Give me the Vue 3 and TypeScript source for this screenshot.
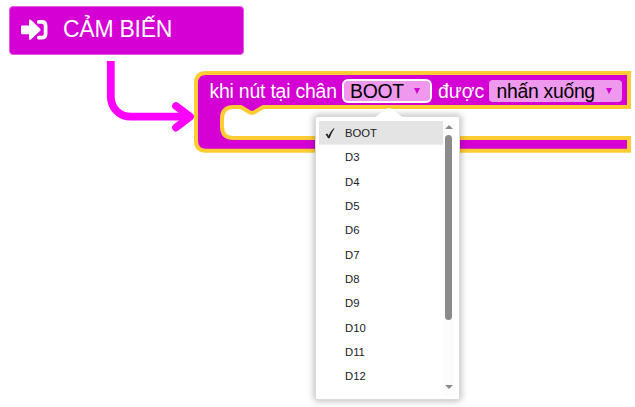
<script setup lang="ts">
import { ref } from 'vue'

const pins: string[] = ['BOOT', 'D3', 'D4', 'D5', 'D6', 'D7', 'D8', 'D9', 'D10', 'D11', 'D12']
const selected = ref('BOOT')
</script>

<template>
  <main class="workspace">
    <header class="category">
      <svg class="category-icon" viewBox="0 0 28 22" aria-hidden="true">
        <path d="M1.2 6.4H8V1.8Q8.2 -.2 10 1L19.2 9.8Q20 10.8 19.2 11.8L10 20.6Q8.2 21.6 8 19.8V15.2H1.2Q0 15.2 0 14V7.6Q0 6.4 1.2 6.4Z" />
        <path class="bracket" d="M17.8 2.9H20.8Q24.6 2.9 24.6 6.7V14.9Q24.6 18.7 20.8 18.7H17.8" />
      </svg>
      <span class="category-name">CẢM BIẾN</span>
    </header>

    <svg class="connector" viewBox="0 0 90 75" aria-hidden="true">
      <path class="line" d="M5.8 1V36.5C5.8 48 14.5 56.7 26 56.7H84" />
      <path class="head" d="M71 46L85 56.7L71 67.5" />
    </svg>

    <section class="block">
      <svg class="block-shape" viewBox="0 0 441 86" aria-hidden="true">
        <path d="M14 4H437V38H71L62.5 43.2Q60 44.5 57.5 43.2L49 38H41.5Q30 38 30 49.5V57.5Q30 69 41.5 69H437V81.8H14Q4 81.8 4 71.8V14Q4 4 14 4Z" />
      </svg>
      <div class="block-row">
        <span class="label first">khi nút tại chân</span>
        <button class="field active"><span>{{ selected }}</span><i class="caret"></i></button>
        <span class="label second">được</span>
        <button class="field state"><span>nhấn xuống</span><i class="caret"></i></button>
      </div>
    </section>

    <div class="menu">
      <svg class="pointer" viewBox="0 0 32 12" aria-hidden="true">
        <path d="M1 11L14 1.5Q16 .3 18 1.5L31 11V12H1Z" />
      </svg>
      <ul class="options">
        <li v-for="pin in pins" :key="pin" class="option" :class="{ chosen: pin === selected }" @click="selected = pin">
          <span class="mark"><svg v-if="pin === selected" viewBox="0 0 10 11"><path d="M.4 6.6L2.2 5.4L3.6 7.7Q5.8 3.2 8.4 .6L9.6 .3Q6.6 4.6 4.6 10.2H3Q2 7.8 .4 6.6Z" /></svg></span>
          <span>{{ pin }}</span>
        </li>
      </ul>
      <div class="scrollbar">
        <i class="up"></i>
        <i class="thumb"></i>
        <i class="down"></i>
      </div>
    </div>
  </main>
</template>

<style>
body {
  margin: 0;
  background: #fff;
}
</style>

<style scoped>
.workspace {
  position: relative;
  width: 635px;
  height: 407px;
  overflow: hidden;
  font-family: "Liberation Sans", Arial, sans-serif;
}
.category {
  position: absolute;
  left: 9px;
  top: 6px;
  box-sizing: border-box;
  width: 235px;
  height: 49px;
  display: flex;
  align-items: center;
  padding: 0 0 3px 11px;
  border: 1px solid #e05be0;
  border-radius: 4px;
  background: #d400d4;
  color: #fff;
}
.category-icon {
  width: 28px;
  height: 22px;
  margin: 2px 14px 0 0;
  fill: #fff;
}
.category-icon .bracket {
  fill: none;
  stroke: #fff;
  stroke-width: 3.7;
  stroke-linecap: round;
}
.category-name {
  font-size: 23px;
  line-height: 28px;
  letter-spacing: -0.25px;
  white-space: nowrap;
}
.connector {
  position: absolute;
  left: 105px;
  top: 60px;
  width: 90px;
  height: 75px;
  fill: none;
  stroke: #f0f;
  stroke-width: 7.8;
}
.connector .head {
  stroke-linecap: round;
  stroke-linejoin: round;
}
.block {
  position: absolute;
  left: 192px;
  top: 69px;
  width: 441px;
  height: 86px;
}
.block-shape {
  position: absolute;
  inset: 0;
  width: 441px;
  height: 86px;
  fill: #d400d4;
  stroke: #fc3;
  stroke-width: 4;
}
.block-row {
  position: relative;
  display: flex;
  align-items: center;
  height: 24px;
  padding: 9.5px 0 0 17.5px;
}
.label {
  color: #fff;
  font-size: 19.4px;
  line-height: 24px;
  letter-spacing: -0.2px;
  white-space: nowrap;
}
.first {
  width: 132.5px;
}
.second {
  width: 52px;
  padding-left: 6px;
  box-sizing: border-box;
  letter-spacing: 0;
}
.field {
  box-sizing: border-box;
  display: flex;
  align-items: center;
  justify-content: space-between;
  height: 22px;
  padding: 0 10.5px 0 7.5px;
  border: 0;
  border-radius: 4px;
  background: #ee99ee;
  color: #000;
  font: 19.4px/22px "Liberation Sans", Arial, sans-serif;
  letter-spacing: -0.3px;
  white-space: nowrap;
}
.field.active {
  width: 90px;
  height: 24px;
  padding: 0 10.5px 0 6px;
  border: 2px solid #fff;
  border-radius: 6px;
  line-height: 20px;
}
.field.state {
  width: 133px;
  margin-left: 5px;
}
.caret {
  margin-top: 1px;
  border: 3.5px solid transparent;
  border-top: 6px solid #d400d4;
  border-bottom: 0;
}
.menu {
  position: absolute;
  left: 315px;
  top: 116px;
  box-sizing: border-box;
  width: 144.5px;
  height: 283.5px;
  display: flex;
  padding: 4px 4px 3px 3px;
  border: 1px solid #dadada;
  border-radius: 2px;
  background: #fff;
  box-shadow: 0 0 7px 1px rgba(0, 0, 0, 0.28);
}
.pointer {
  position: absolute;
  left: 57px;
  top: -10px;
  width: 32px;
  height: 12px;
  fill: #fff;
}
.options {
  flex: 1;
  margin: 0;
  padding: 0;
  list-style: none;
}
.option {
  display: flex;
  align-items: center;
  height: 24.3px;
  color: #222;
  font-size: 11.3px;
}
.chosen {
  background: linear-gradient(#e4e4e4, #e4e4e4) 0 0 / 100% 23.7px no-repeat;
}
.mark {
  width: 20px;
  height: 11px;
  padding-left: 6px;
}
.mark svg {
  display: block;
  width: 10px;
  height: 11px;
  fill: #222;
}
.scrollbar {
  display: flex;
  flex-direction: column;
  align-items: center;
  box-sizing: border-box;
  width: 12px;
  padding: 4px 0 7px;
  background: #fcfcfc;
}
.up,
.down {
  border: 4px solid transparent;
}
.up {
  border-top: 0;
  border-bottom: 4.5px solid #8b8b8b;
}
.down {
  margin-top: auto;
  border-bottom: 0;
  border-top: 4.5px solid #8b8b8b;
}
.thumb {
  width: 7.5px;
  height: 185px;
  margin-top: 6px;
  border-radius: 4px;
  background: #8b8b8b;
}
</style>
